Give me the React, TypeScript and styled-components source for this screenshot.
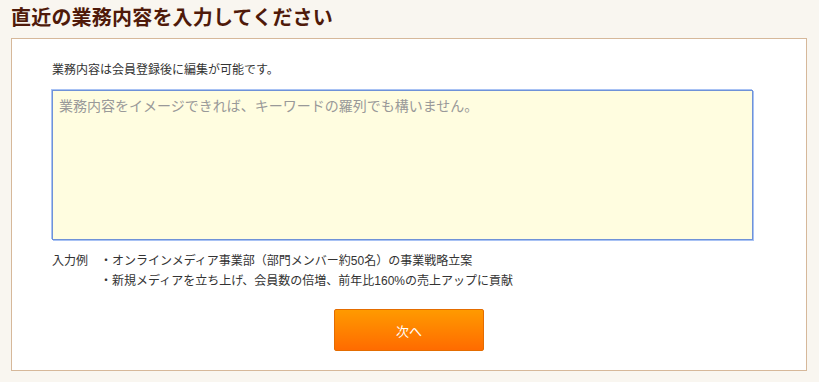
import styled, { createGlobalStyle } from 'styled-components'

const GlobalStyle = createGlobalStyle`
  html, body {
    margin: 0;
    padding: 0;
    background: #f9f6f0;
    font-family: "Liberation Sans", "Noto Sans CJK JP", sans-serif;
    color: #333;
  }
`

const examples = [
  '・オンラインメディア事業部（部門メンバー約50名）の事業戦略立案',
  '・新規メディアを立ち上げ、会員数の倍増、前年比160%の売上アップに貢献',
]

function App() {
  return (
    <>
      <GlobalStyle />
      <Page>
        <Title>直近の業務内容を入力してください</Title>
        <Card>
          <Note>業務内容は会員登録後に編集が可能です。</Note>
          <TextArea placeholder='業務内容をイメージできれば、キーワードの羅列でも構いません。' />
          <Examples>
            <ExampleLabel>入力例</ExampleLabel>
            <ExampleList>
              {examples.map(line => (
                <li key={line}>{line}</li>
              ))}
            </ExampleList>
          </Examples>
          <ButtonRow>
            <NextButton>次へ</NextButton>
          </ButtonRow>
        </Card>
      </Page>
    </>
  )
}

const Page = styled.div`
  padding: 6px 12px 11px 11px;
`

const Title = styled.h1`
  margin: 0 0 8px;
  font-size: 20px;
  line-height: 24px;
  font-weight: bold;
  color: #4f1a0a;
  letter-spacing: 0.2px;
`

const Card = styled.div`
  background: #fff;
  border: 1px solid #d6b89a;
  padding: 23px 40px 19px 40px;
  display: flex;
  flex-direction: column;
`

const Note = styled.p`
  margin: 0 0 11px;
  font-size: 12px;
  line-height: 17px;
  color: #333;
`

const TextArea = styled.textarea`
  box-sizing: border-box;
  width: 701px;
  height: 150px;
  margin: 0;
  padding: 5px 6px;
  background: #fffde0;
  border: 1px solid #6f92d8;
  box-shadow: 1px 1px 0 #a8c2f4, -1px -1px 0 #a8c2f4;
  outline: none;
  resize: none;
  font-family: inherit;
  font-size: 14px;
  line-height: 20px;
  color: #333;

  &::placeholder {
    color: #999;
  }
`

const Examples = styled.div`
  display: grid;
  grid-template-columns: 48px 1fr;
  margin-top: 11px;
  font-size: 12px;
  line-height: 20px;
  color: #333;
`

const ExampleLabel = styled.span``

const ExampleList = styled.ul`
  margin: 0;
  padding: 0;
  list-style: none;
`

const ButtonRow = styled.div`
  display: flex;
  justify-content: center;
  margin-top: 18px;
`

const NextButton = styled.button`
  width: 150px;
  height: 42px;
  border: 1px solid #e46c00;
  border-radius: 2px;
  background: linear-gradient(#ff9a00, #ff6b00);
  color: #fff;
  font-family: inherit;
  font-size: 13px;
  cursor: pointer;
`

export default App
